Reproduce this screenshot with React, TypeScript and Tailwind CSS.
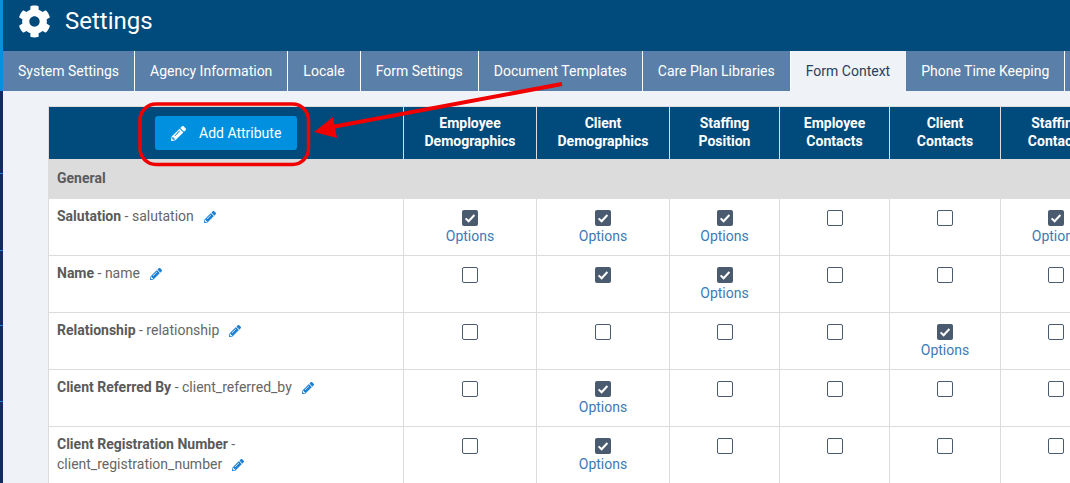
import { FaCog, FaPencilAlt } from "react-icons/fa";

const tabs = [
  "System Settings",
  "Agency Information",
  "Locale",
  "Form Settings",
  "Document Templates",
  "Care Plan Libraries",
  "Form Context",
  "Phone Time Keeping",
];

const columns = [
  { top: "Employee", bottom: "Demographics", width: "w-[133px]" },
  { top: "Client", bottom: "Demographics", width: "w-[133px]" },
  { top: "Staffing", bottom: "Position", width: "w-[110px]" },
  { top: "Employee", bottom: "Contacts", width: "w-[110px]" },
  { top: "Client", bottom: "Contacts", width: "w-[111px]" },
  { top: "Staffing", bottom: "Contacts", width: "w-[111px]" },
];

// 0 = empty, 1 = checked, 2 = checked with options link
const rows = [
  { label: "Salutation", name: "salutation", cells: [2, 2, 2, 0, 0, 2] },
  { label: "Name", name: "name", cells: [0, 1, 2, 0, 0, 0] },
  { label: "Relationship", name: "relationship", cells: [0, 0, 0, 0, 2, 0] },
  { label: "Client Referred By", name: "client_referred_by", cells: [0, 2, 0, 0, 0, 0] },
  { label: "Client Registration Number", name: "client_registration_number", cells: [0, 2, 0, 0, 0, 0] },
];

function Checkbox({ checked }: { checked: boolean }) {
  if (checked) {
    return (
      <span className="mx-auto flex h-4 w-4 items-center justify-center rounded-[2px] bg-[#4a5b70]">
        <svg viewBox="0 0 16 16" className="h-4 w-4" fill="none">
          <path d="M3.6 8.4 6.6 11.3 12.4 5" stroke="white" strokeWidth="2" />
        </svg>
      </span>
    );
  }
  return <span className="mx-auto block h-4 w-4 rounded-[2px] border border-[#4a5b70] bg-white" />;
}

export default function App() {
  return (
    <div className="relative flex h-screen w-screen overflow-hidden bg-[#eff2f6] font-['Roboto',sans-serif] text-sm">
      {/* Sidebar strip */}
      <div className="flex w-[3px] shrink-0 flex-col bg-[#132a63]">
        <div className="h-[91px] shrink-0 bg-[#0a8fe0]" />
        <div className="h-[83px] shrink-0 border-b border-[#1e80d8]" />
        <div className="h-[77px] shrink-0 border-b border-[#1e80d8]" />
        <div className="h-[75px] shrink-0 border-b border-[#1e80d8]" />
        <div className="h-[76px] shrink-0 border-b border-[#1e80d8]" />
      </div>

      <div className="min-w-0 flex-1">
        {/* Header */}
        <div className="flex h-[51px] items-center bg-[#004a7c] pb-[9px] pl-[15px] text-white">
          <FaCog className="h-[33px] w-[33px]" />
          <h1 className="ml-[14px] text-[24px] leading-none">Settings</h1>
        </div>

        {/* Tabs */}
        <div className="flex h-10 bg-[#5a7fa8]">
          {tabs.map((tab) => (
            <div
              key={tab}
              className={
                tab === "Form Context"
                  ? "flex shrink-0 items-center whitespace-nowrap border-r border-[#eff2f6] bg-[#eff2f6] px-[15px] text-[#2a3f5f]"
                  : "flex shrink-0 items-center whitespace-nowrap border-r border-white px-[15px] text-white"
              }
            >
              {tab}
            </div>
          ))}
        </div>

        {/* Table */}
        <div className="pl-[45px] pt-[15px]">
          <table className="w-[1064px] table-fixed border-separate border-spacing-0 border-l border-t border-[#dcdcdc] bg-white">
            <thead>
              <tr className="h-[52px] bg-[#004a7c] text-white">
                <th className="w-[355px] border-r border-[#dcdcdc] font-normal">
                  <button className="mx-auto flex h-[34px] w-[142px] items-center rounded-[3px] bg-[#0090e0] pl-4">
                    <FaPencilAlt className="h-[15px] w-[15px]" />
                    <span className="ml-[13px]">Add Attribute</span>
                  </button>
                </th>
                {columns.map((col, i) => (
                  <th key={i} className={`${col.width} border-r border-[#dcdcdc] pb-[2px] font-bold leading-[18px]`}>
                    {col.top}
                    <br />
                    {col.bottom}
                  </th>
                ))}
              </tr>
            </thead>
            <tbody>
              <tr className="h-10 bg-[#dcdcdc]">
                <td colSpan={7} className="pb-[2px] pl-2 font-bold text-[#5a5a5a]">
                  General
                </td>
              </tr>
              {rows.map((row) => (
                <tr key={row.name} className="h-[57px]">
                  <td className="border-b border-r border-[#dcdcdc] pl-2 pr-2 pt-[7px] align-top leading-5 text-[#666666]">
                    <span className="font-bold text-[#5a5a5a]">{row.label}</span> - {row.name}
                    <FaPencilAlt className="ml-[10px] inline h-3 w-3 text-[#1b7fd6]" />
                  </td>
                  {row.cells.map((cell, i) => (
                    <td key={i} className="border-b border-r border-[#dcdcdc] pt-[11px] text-center align-top">
                      <Checkbox checked={cell > 0} />
                      {cell === 2 && <div className="leading-5 text-[#3c7ab5]">Options</div>}
                    </td>
                  ))}
                </tr>
              ))}
            </tbody>
          </table>
        </div>
      </div>

      {/* Red annotation */}
      <svg className="pointer-events-none absolute left-0 top-0 h-[483px] w-[1070px]" viewBox="0 0 1070 483" fill="none">
        <rect x="140" y="104" width="168.5" height="60.5" rx="16" stroke="#f00000" strokeWidth="3.5" />
        <path d="M562 84 332 127" stroke="#f00000" strokeWidth="4" />
        <path d="M314 132 333 117 337 138Z" fill="#f00000" />
      </svg>
    </div>
  );
}
